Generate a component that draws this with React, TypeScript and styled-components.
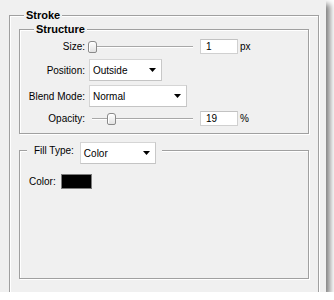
import React from "react";
import styled, { createGlobalStyle } from "styled-components";

const GlobalStyle = createGlobalStyle`
  html, body {
    margin: 0;
    padding: 0;
    background: #ffffff;
  }
  body {
    font-family: "Liberation Sans", Arial, sans-serif;
    font-size: 10px;
    color: #000;
  }
`;

const Panel = styled.div`
  width: 326px;
  height: 292px;
  box-sizing: border-box;
  padding: 15px 7px 0 9px;
  background: #f0f0f0;
  box-shadow: 4px 4px 6px rgba(0, 0, 0, 0.5);
  overflow: hidden;
`;

// etched group box: grey line with a white line one pixel down/right
const Group = styled.section<{ $gap?: number }>`
  margin-top: ${p => p.$gap ?? 0}px;
  border: 1px solid #a0a0a0;
  box-shadow: inset 1px 1px 0 #fff, 1px 1px 0 #fff;
`;

// caption sits over the top border line
const Caption = styled.div`
  width: fit-content;
  margin: -7px 0 0 14px;
  padding: 0 2px;
  background: #f0f0f0;
  font-weight: bold;
  font-size: 11px;
  line-height: 13px;
`;

const ControlCaption = styled.div`
  width: fit-content;
  height: 17px;
  margin: -9px 0 0 7px;
  padding: 0 6px 0 7px;
  background: #f0f0f0;
  display: flex;
  align-items: flex-start;
  gap: 6px;
`;

const Body = styled.div<{ $pad: string }>`
  padding: ${p => p.$pad};
  display: flex;
  flex-direction: column;
`;

const Row = styled.div<{ $h: number; $top?: number }>`
  display: flex;
  align-items: center;
  height: ${p => p.$h}px;
  margin-top: ${p => p.$top ?? 0}px;
`;

const Label = styled.span`
  width: 65px;
  margin-right: 4px;
  text-align: right;
  white-space: nowrap;
`;

const InlineLabel = styled.span`
  line-height: 17px;
  white-space: nowrap;
`;

const Select = styled.div<{ $w: number }>`
  width: ${p => p.$w}px;
  height: 22px;
  box-sizing: border-box;
  flex: none;
  display: flex;
  align-items: center;
  justify-content: space-between;
  padding: 0 5px 0 3px;
  background: #fff;
  border: 1px solid #d5d5d5;
  border-right-color: #c8c8c8;
  border-bottom-color: #c4c4c4;
`;

const Slider = styled.div`
  position: relative;
  width: 105px;
  height: 15px;
  margin-left: -1px;
  display: flex;
  align-items: center;
`;

const Track = styled.div`
  flex: 1;
  margin-left: 4px;
  height: 0;
  border-top: 1px solid #a8a8a8;
  border-bottom: 1px solid #fff;
`;

const Thumb = styled.div`
  position: absolute;
  top: 2px;
  width: 9px;
  height: 12px;
  box-sizing: border-box;
  border: 1px solid #8a8a8a;
  border-radius: 3px 3px 2px 2px;
  background: linear-gradient(#ffffff, #e2e2e2);
  box-shadow: inset 1px 1px 0 #fff;
`;

const Field = styled.div`
  width: 38px;
  height: 15px;
  box-sizing: border-box;
  margin-left: 7px;
  padding-left: 5px;
  line-height: 13px;
  background: #fff;
  border: 1px solid #d0d0d0;
  border-top-color: #c2c2c2;
`;

const Unit = styled.span`
  margin-left: 2px;
`;

const Swatch = styled.div`
  width: 31px;
  height: 15px;
  box-sizing: border-box;
  margin-left: 5px;
  background: #000;
  border: 1px solid #7c7c7c;
`;

function Arrow() {
  return (
    <svg width="7" height="4" viewBox="0 0 7 4">
      <polygon points="0,0 7,0 3.5,4" fill="#000" />
    </svg>
  );
}

function Dropdown({ value, width }: { value: string; width: number }) {
  return (
    <Select $w={width}>
      <span>{value}</span>
      <Arrow />
    </Select>
  );
}

function RangeRow({ label, value, unit, pct, top }: { label: string; value: string; unit: string; pct: number; top?: number }) {
  return (
    <Row $h={15} $top={top}>
      <Label>{label}</Label>
      <Slider>
        <Track />
        <Thumb style={{ left: Math.round(pct * 100) }} />
      </Slider>
      <Field>{value}</Field>
      <Unit>{unit}</Unit>
    </Row>
  );
}

export default function App() {
  return (
    <>
      <GlobalStyle />
      <Panel>
        <Group>
          <Caption>Stroke</Caption>
          <Body $pad="0 9px 40px 9px">
            <Group $gap={7}>
              <Caption>Structure</Caption>
              <Body $pad="3px 0 7px 0">
                <RangeRow label="Size:" value="1" unit="px" pct={0} />
                <Row $h={22} $top={5}>
                  <Label>Position:</Label>
                  <Dropdown value="Outside" width={73} />
                </Row>
                <Row $h={22} $top={4}>
                  <Label>Blend Mode:</Label>
                  <Dropdown value="Normal" width={98} />
                </Row>
                <RangeRow label="Opacity:" value="19" unit="%" pct={0.19} top={4} />
              </Body>
            </Group>
            <Group $gap={16}>
              <ControlCaption>
                <InlineLabel>Fill Type:</InlineLabel>
                <Dropdown value="Color" width={76} />
              </ControlCaption>
              <Body $pad="15px 0 89px 9px">
                <Row $h={15}>
                  <span>Color:</span>
                  <Swatch />
                </Row>
              </Body>
            </Group>
          </Body>
        </Group>
      </Panel>
    </>
  );
}
